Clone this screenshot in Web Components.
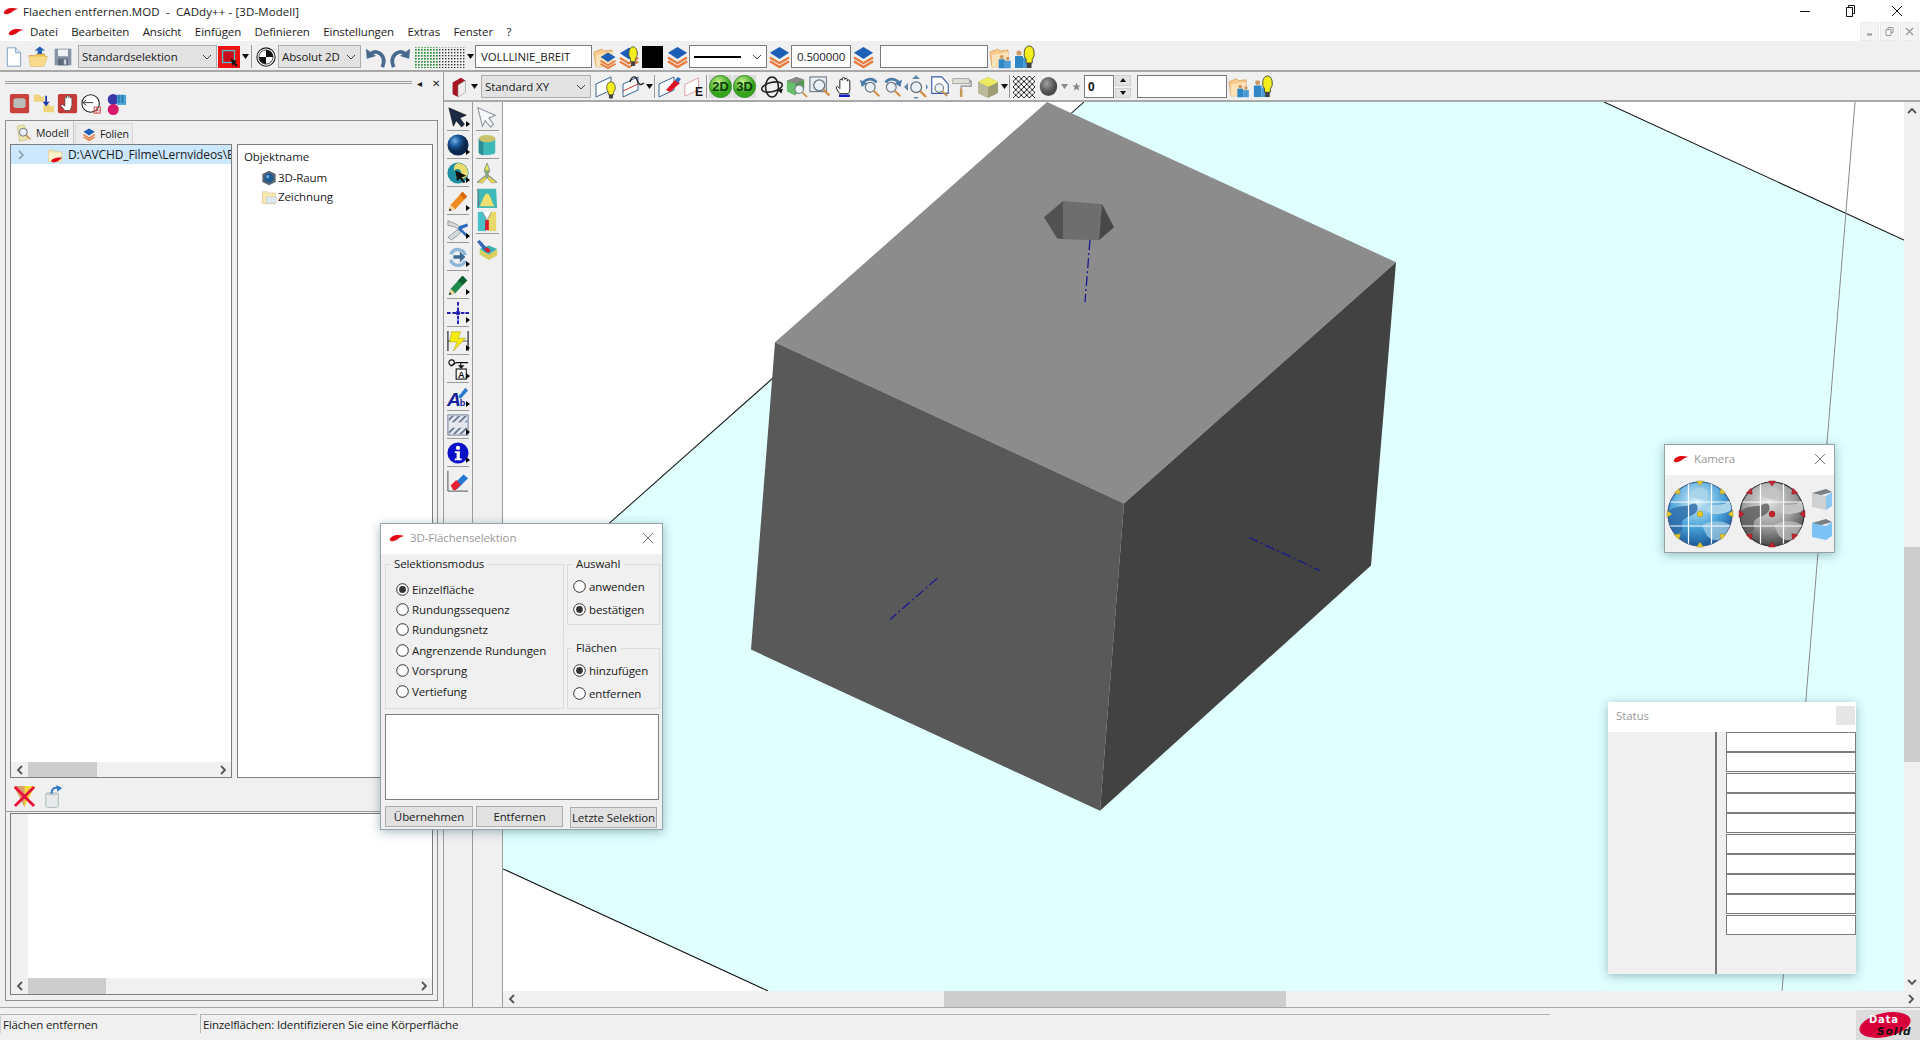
<!DOCTYPE html>
<html lang="de">
<head>
<meta charset="utf-8">
<title>CADdy++</title>
<style>
  html, body { margin: 0; height: 100%; overflow: hidden; }
  body { background: #f0f0f0; color: #1a1a1a; font: 11.5px "Open Sans", "Noto Sans", sans-serif; letter-spacing: -.1px; position: relative; }
</style>
</head>
<body>
<cad-titlebar title-text="Flaechen entfernen.MOD  -  CADdy++ - [3D-Modell]"></cad-titlebar>
<cad-menubar></cad-menubar>
<cad-toolbar class="top" pad="5">
  <cad-icon name="new" w="20" style="margin-left:4px"></cad-icon>
  <cad-icon name="open" w="21" style="margin-left:4px"></cad-icon>
  <cad-icon name="save" w="20" style="margin-left:4px"></cad-icon>
  <cad-combo w="139" style="margin-left:5px">Standardselektion</cad-combo>
  <cad-icon name="redbtn" w="22" style="margin-left:1px"></cad-icon>
  <cad-arrow style="margin-left:2px"></cad-arrow>
  <cad-sep style="margin-left:2px"></cad-sep>
  <cad-icon name="target" w="20" style="margin-left:4px"></cad-icon>
  <cad-combo w="83" style="margin-left:2px">Absolut 2D</cad-combo>
  <cad-icon name="undo" w="22" style="margin-left:4px"></cad-icon>
  <cad-icon name="redo" w="22" style="margin-left:2px"></cad-icon>
  <cad-icon name="grid" w="50" style="margin-left:4px"></cad-icon>
  <cad-arrow style="margin-left:2px"></cad-arrow>
  <cad-input w="117" style="margin-left:1px">VOLLLINIE_BREIT</cad-input>
  <cad-icon name="folderlayers" w="24" style="margin-left:1px"></cad-icon>
  <cad-icon name="layerbulb" w="22" style="margin-left:1px"></cad-icon>
  <cad-swatch style="margin-left:2px"></cad-swatch>
  <cad-icon name="layers" w="23" style="margin-left:3px"></cad-icon>
  <cad-linecombo></cad-linecombo>
  <cad-icon name="layers" w="23" style="margin-left:1px"></cad-icon>
  <cad-input w="60">0.500000</cad-input>
  <cad-icon name="layers" w="23" style="margin-left:1px"></cad-icon>
  <cad-input w="108" style="margin-left:5px"></cad-input>
  <cad-icon name="folderpeople" w="24" style="margin-left:1px"></cad-icon>
  <cad-icon name="peoplebulb" w="24"></cad-icon>
</cad-toolbar>

<cad-workspace>
  <model-panel slot="left"></model-panel>
  <cad-toolbar slot="toolbar" pad="3">
    <cad-icon name="redcube" w="22" style="margin-left:4px"></cad-icon>
    <cad-arrow style="margin-left:1px"></cad-arrow>
    <cad-combo w="110" style="margin-left:3px">Standard XY</cad-combo>
    <cad-icon name="planebulb" w="24" style="margin-left:3px"></cad-icon>
    <cad-icon name="planecurve" w="24" style="margin-left:3px"></cad-icon>
    <cad-arrow style="margin-left:1px"></cad-arrow>
    <cad-sep style="margin-left:1px"></cad-sep>
    <cad-icon name="planepen" w="24" style="margin-left:2px"></cad-icon>
    <cad-icon name="planee" w="22" style="margin-left:2px"></cad-icon>
    <cad-sep style="margin-left:1px"></cad-sep>
    <cad-icon name="btn2d" w="23" style="margin-left:2px"></cad-icon>
    <cad-icon name="btn3d" w="23" style="margin-left:1px"></cad-icon>
    <cad-icon name="orbit" w="22" style="margin-left:5px"></cad-icon>
    <cad-icon name="zoomcube" w="23" style="margin-left:2px"></cad-icon>
    <cad-icon name="zoombox" w="22" style="margin-left:1px"></cad-icon>
    <cad-icon name="hand" w="20" style="margin-left:3px"></cad-icon>
    <cad-icon name="rotzooml" w="22" style="margin-left:5px"></cad-icon>
    <cad-icon name="rotzoomr" w="22" style="margin-left:0"></cad-icon>
    <cad-icon name="zoomarrows" w="24" style="margin-left:1px"></cad-icon>
    <cad-icon name="zoomdoc" w="22" style="margin-left:1px"></cad-icon>
    <cad-icon name="roller" w="20" style="margin-left:1px"></cad-icon>
    <cad-icon name="goldcube" w="24" style="margin-left:4px"></cad-icon>
    <cad-arrow style="margin-left:1px"></cad-arrow>
    <cad-sep style="margin-left:1px"></cad-sep>
    <cad-icon name="checker" w="22" style="margin-left:3px"></cad-icon>
    <cad-icon name="sphere" w="19" style="margin-left:4px"></cad-icon>
    <cad-arrow gray style="margin-left:3px"></cad-arrow>
    <cad-icon name="star" w="9" style="margin-left:4px"></cad-icon>
    <cad-spin style="margin-left:3px">0</cad-spin>
    <cad-input w="90" style="margin-left:6px"></cad-input>
    <cad-icon name="folderpeople" w="23" style="margin-left:1px"></cad-icon>
    <cad-icon name="peoplebulb" w="23" style="margin-left:1px"></cad-icon>
  </cad-toolbar>
  <tool-strip slot="tools"></tool-strip>
  <model-canvas slot="canvas"></model-canvas>
</cad-workspace>
<cad-statusbar></cad-statusbar>

<float-window title-text="3D-Flächenselektion" logo style="left:380px;top:523px;width:283px;height:307px">
  <selection-form></selection-form>
</float-window>
<float-window title-text="Kamera" logo style="left:1664px;top:444px;width:171px;height:109px">
  <camera-controls></camera-controls>
</float-window>
<float-window title-text="Status" grey-close style="left:1608px;top:702px;width:248px;height:272px">
  <status-fields></status-fields>
</float-window>

<script>
const SWOOSH = '<path d="M1 15C3 8 12 6 23 9c-5 1-7 2-10 5-4 3-10 4-12 1z" fill="#e30613"/>';
const LAYERS = '<path d="M2 13l10 6 10-6" fill="none" stroke="#e87a3c" stroke-width="2.4"/><path d="M2 17l10 6 10-6" fill="none" stroke="#e87a3c" stroke-width="2.4"/><path d="M12 2l10 6-10 6.500-10-6.500z" fill="#1c5fb4"/>';
const BULB = '<path d="M12 1a7.500 7.500 0 0 0-4.500 13.500V18h9v-3.500A7.500 7.500 0 0 0 12 1z" fill="#f4ee1e" stroke="#333"/><rect x="8.500" y="18" width="7" height="5" fill="#444"/>';
const FOLDER = '<path d="M1 7l8-3 2 2 8-1v16L3 22z" fill="#f7c98a" stroke="#d9a25e" stroke-width=".8"/><path d="M3 10l16-3v14L3 22z" fill="#fbe2b8"/>';
const PEOPLE = '<g fill="#2f86c5"><circle cx="9" cy="8" r="2.600" fill="#c96"/><path d="M5 11h8v12H5z"/><circle cx="17" cy="10" r="2.400" fill="#c96"/><path d="M13 13h8v10h-8z" fill="#4a9bd6"/></g>';
const PLANE = (c) => `<path d="M2 9L17 2v13L2 22z" fill="#fff" stroke="${c}"/>`;
const MAG = '<circle cx="10" cy="10" r="6.500" fill="#eaf2f8" stroke="#6b7480" stroke-width="1.600"/><path d="M15 15l7 7" stroke="#d28a3c" stroke-width="2.600"/>';
const GREENBTN = (id, t) => `<defs><radialGradient id="${id}" cx=".4" cy=".3"><stop offset="0" stop-color="#c6f58c"/><stop offset="1" stop-color="#36a51e"/></radialGradient></defs><rect width="24" height="24" fill="#dcdcdc"/><circle cx="12" cy="12" r="11.500" fill="url(#${id})" stroke="#3a8d2a"/><text x="12" y="17" text-anchor="middle" font-family="Liberation Sans" font-weight="700" font-size="13.500" letter-spacing="0" fill="#0c3c0c">${t}</text>`;

const ICONS = {
  swoosh: SWOOSH,
  new: '<path d="M4 1h10l6 6v16H4z" fill="#fff" stroke="#6b93bd"/><path d="M14 1v6h6" fill="#dfe8f2" stroke="#6b93bd"/>',
  open: '<path d="M1 11h7l2-2h9v3h3l-4 11H3z" fill="#f3c050" stroke="#c2913a" stroke-width=".8"/><path d="M1 12l2 11 15 0 4-11z" fill="#f9d98a"/><path d="M11 9V5H7.500l6-4.500 6 4.500H16v4z" fill="#2560b8"/>',
  save: '<rect x="2" y="2" width="20" height="20" fill="#8794a5"/><rect x="6" y="3" width="12" height="8" fill="#f0f3f6"/><rect x="6" y="14" width="12" height="8" fill="#5d6a7b"/><rect x="13" y="15" width="3" height="6" fill="#d0d6de"/>',
  redbtn: '<rect width="24" height="24" fill="#ee1111"/><rect x="5" y="5" width="13" height="13" fill="#c80d1a" stroke="#56b9c8" stroke-width="1.500"/><path d="M14 14l7 3-2.500 1 3 3-1.500 1.500-3-3-1 2.500z" fill="#111"/>',
  target: '<circle cx="12" cy="12" r="11" fill="#fff" stroke="#222" stroke-width="1.300"/><circle cx="12" cy="12" r="8.500" fill="#fff" stroke="#222"/><path d="M12 12V3.500A8.500 8.500 0 0 1 20.500 12zM12 12v8.500A8.500 8.500 0 0 1 3.500 12z" fill="#111"/>',
  undo: '<path d="M19 23C24 11 14 3 7 8" fill="none" stroke="#47698c" stroke-width="4"/><path d="M1 3l1 11 10-3z" fill="#47698c"/>',
  redo: '<path d="M5 23C0 11 10 3 17 8" fill="none" stroke="#47698c" stroke-width="4"/><path d="M23 3l-1 11-10-3z" fill="#47698c"/>',
  grid: '<defs><pattern id="gd" width="3" height="3" patternUnits="userSpaceOnUse"><rect width="1.700" height="1.700" fill="#2f8f3a"/></pattern><pattern id="kd" width="3" height="3" patternUnits="userSpaceOnUse"><rect width="1.400" height="1.400" fill="#333"/></pattern></defs><rect y="1" width="24" height="21" fill="url(#gd)"/><rect x="24" y="1" width="26" height="21" fill="url(#kd)"/>',
  layers: LAYERS,
  folderlayers: FOLDER + '<g transform="translate(6 6) scale(.75)">' + LAYERS + '</g>',
  layerbulb: LAYERS + '<g transform="translate(9 0) scale(.62 .95)">' + BULB + '</g>',
  folderpeople: FOLDER + '<g transform="translate(6 6) scale(.75)">' + PEOPLE + '</g>',
  peoplebulb: '<g transform="translate(-3 0)">' + PEOPLE + '</g><g transform="translate(8 0) scale(.68 1)">' + BULB + '</g>',
  redcube: '<path d="M5 7l9-5 5 3-8 5v13l-6-3z" fill="#a31622"/><path d="M11 10l8-5v13l-8 5z" fill="#eee" stroke="#999" stroke-width=".7"/>',
  planebulb: PLANE('#39648f') + '<g transform="translate(10 6) scale(.58 .76)">' + BULB + '</g>',
  planecurve: PLANE('#39648f') + '<path d="M2 16L17 9" stroke="#c33"/><path d="M9 7c2-7 6-6 7-2s3 6 7 3" fill="none" stroke="#222" stroke-width="1.400"/>',
  planepen: PLANE('#39648f') + '<path d="M9 15l9-10 5 3-10 9z" fill="#e01020"/><path d="M18 5l3-3 3 2-3 4z" fill="#2a6fc0"/>',
  planee: PLANE('#d89a9a') + '<text x="13" y="22" font-family="Liberation Sans" font-weight="700" font-size="13" fill="#111">E</text>',
  btn2d: GREENBTN('g2', '2D'),
  btn3d: GREENBTN('g3', '3D'),
  orbit: '<g fill="none" stroke="#222" stroke-width="1.700"><ellipse cx="12" cy="12" rx="7" ry="11"/><ellipse cx="12" cy="12" rx="11.500" ry="5" transform="rotate(-14 12 12)"/></g><path d="M18 15l6-1-2 5z" fill="#111"/>',
  zoomcube: '<path d="M2 6l10-4 8 3v9l-10 7-8-4z" fill="#4f9a50"/><path d="M2 6l10-4 8 3-9 4z" fill="#888"/><path d="M2 6l9 3v12l-9-4z" fill="#69c06c"/><g transform="translate(8 8) scale(.68)">' + MAG + '</g>',
  zoombox: '<rect x="1" y="1" width="18" height="16" fill="#e8eef2" stroke="#788290" stroke-width="1.300"/><g transform="translate(2 1) scale(.92)">' + MAG + '</g>',
  hand: '<path d="M7 20c-2-3-5-6-4-8s3 1 4 2V4c0-2 3-2 3 0V2c0-2 3-2 3 0v1c0-2 3-2 3 0v2c0-2 3-2 3 0v10c0 2-1 4-2 5z" fill="#fff" stroke="#111" stroke-width="1.100"/><rect x="6" y="21" width="13" height="3" fill="#1020c0"/>',
  rotzooml: '<path d="M4 10C5 3 15 1 19 7" fill="none" stroke="#4c7da8" stroke-width="3"/><path d="M1 4l2 8 6-4z" fill="#4c7da8"/><g transform="translate(4 4) scale(.82)">' + MAG + '</g>',
  rotzoomr: '<path d="M20 10C19 3 9 1 5 7" fill="none" stroke="#4c7da8" stroke-width="3"/><path d="M23 4l-2 8-6-4z" fill="#4c7da8"/><g transform="translate(3 4) scale(.82)">' + MAG + '</g>',
  zoomarrows: '<g fill="#5f89ad"><path d="M12 0l4 4H8zM0 12l4-4v8zM22 9l2 3-2 3zM9 22h6l-3 2z"/></g><g transform="translate(4 4) scale(.82)">' + MAG + '</g>',
  zoomdoc: '<path d="M3 1h11l7 8v10l-18 0z" fill="#fff" stroke="#3a58a5" stroke-width="1.200"/><g transform="translate(4 6) scale(.72)">' + MAG + '</g>',
  roller: '<rect x="1" y="2" width="20" height="6" fill="#dcdfd8" stroke="#98a09a"/><path d="M21 5h2v6H11v4" fill="none" stroke="#888" stroke-width="1.400"/><rect x="9.500" y="14" width="3" height="10" fill="#c79a5a"/>',
  goldcube: '<path d="M2 7l10-5 10 5v11l-10 5-10-5z" fill="#9d9c74"/><path d="M2 7l10-5 10 5-10 5z" fill="#ecec60"/><path d="M2 7l10 5v11l-10-5z" fill="#b9b89a"/>',
  checker: '<defs><pattern id="ch" width="6" height="6" patternUnits="userSpaceOnUse"><path d="M0 0l6 6M6 0L0 6" stroke="#111" stroke-width="1"/></pattern></defs><rect width="24" height="24" fill="#fff"/><rect width="24" height="24" fill="url(#ch)"/>',
  sphere: '<defs><radialGradient id="sp" cx=".4" cy=".35"><stop offset="0" stop-color="#a0a0a0"/><stop offset="1" stop-color="#4c4c4c"/></radialGradient></defs><ellipse cx="12" cy="12" rx="11" ry="12" fill="url(#sp)"/>',
  star: '<path d="M12 1l3 8h8l-6 5 2 9-7-5-7 5 2-9-6-5h8z" fill="#888"/>',
  /* left column tools */
  arrowdark: '<path d="M2 2l19 8-7 3 5 7-3 3-6-7-3 6z" fill="#1d2a44" stroke="#000" stroke-width=".6"/>',
  arrowlight: '<path d="M2 2l19 8-7 3 5 7-3 3-6-7-3 6z" fill="#f6f8fa" stroke="#8d97a0" stroke-width="1.200"/>',
  ball: '<defs><radialGradient id="bl" cx=".35" cy=".3"><stop offset="0" stop-color="#7cb4e8"/><stop offset=".5" stop-color="#1c5a9c"/><stop offset="1" stop-color="#0a2850"/></radialGradient></defs><circle cx="12" cy="12" r="11.500" fill="url(#bl)"/>',
  globecursor: '<circle cx="12" cy="12" r="11.500" fill="#1d8fa0"/><path d="M12 1a11 11 0 0 1 11 11c0 5-8 9-14 4 4-1 8-2 6-6-1-3-6-3-7 0-1-4 0-8 4-9z" fill="#e9dd6e"/><path d="M9 9l12 6-5 2 4 5-2 1-4-5-3 3z" fill="#111"/>',
  pencil: '<path d="M2 23l2-7L17 2l5 5L9 21z" fill="#ee8a1e"/><path d="M17 2l5 5-3 3-5-5z" fill="#d56a10"/><path d="M2 23l2-7 5 5z" fill="#f2d6a4"/><path d="M2 23l1-3 2 2z" fill="#222"/>',
  tools: '<path d="M1 3l10 4 4 4-2 2-4-3-8-2zM1 21l9-7 3-1 2 2-2 3-8 6z" fill="#d4d9de" stroke="#777" stroke-width=".7"/><path d="M13 9l9-3 1 3-7 3 6 6-2 2-8-8z" fill="#2c6bc0"/>',
  rotate: '<path d="M20 10C18 3 8 1 4 9" fill="none" stroke="#8fb6d6" stroke-width="3.600"/><path d="M4 15c2 7 12 9 16 1" fill="none" stroke="#8fb6d6" stroke-width="3.600"/><path d="M7 10h7V6l6 6-6 6v-4H7z" fill="#3d6b94"/>',
  greenpen: '<path d="M2 23l2-7L17 2l5 5L9 21z" fill="#1f8a4a"/><path d="M17 2l5 5-5 5-5-5z" fill="#0e5f30"/><path d="M2 23l2-7 5 5z" fill="#f2d6a4"/><path d="M2 23l1-3 2 2z" fill="#222"/>',
  cross: '<g fill="#1212b0"><rect x="11" y="0" width="2" height="4"/><rect x="11" y="6" width="2" height="4"/><rect x="11" y="15" width="2" height="4"/><rect x="11" y="20" width="2" height="4"/><rect x="0" y="11" width="4" height="2"/><rect x="6" y="11" width="4" height="2"/><rect x="15" y="11" width="4" height="2"/><rect x="20" y="11" width="4" height="2"/><rect x="10" y="10" width="4" height="4"/></g>',
  bolt: '<path d="M1 1v22M23 1v22" stroke="#333" stroke-width="1.400"/><path d="M1 12h22" stroke="#333" stroke-width=".8"/><path d="M5 2h10l-3 7h8L7 23l4-10H3z" fill="#f4ec10" stroke="#a99d10" stroke-width=".6"/>',
  weld: '<circle cx="5" cy="5" r="3" fill="none" stroke="#111" stroke-width="1.200"/><path d="M4 9l6-4h13M15 5v6" stroke="#111" stroke-width="1.200" fill="none"/><path d="M12 8h7l-3.500 4z" fill="#111"/><rect x="10" y="12" width="11" height="11" fill="#fff" stroke="#111" stroke-width="1.200"/><text x="15.500" y="21.500" text-anchor="middle" font-family="Liberation Sans" font-weight="700" font-size="10" fill="#111">A</text>',
  textpen: '<text x="0" y="22" font-family="Liberation Sans" font-weight="700" font-style="italic" font-size="21" fill="#14209c">A</text><text x="14" y="22" font-family="Liberation Sans" font-weight="700" font-size="10" fill="#14209c">b</text><path d="M12 12l8-10 3 3-8 9z" fill="#2f7bd0"/>',
  hatch: '<defs><pattern id="hc" width="5" height="5" patternUnits="userSpaceOnUse" patternTransform="rotate(-45)"><rect width="5" height="1.800" fill="#5c6d8c"/></pattern></defs><rect x="1" y="1" width="22" height="22" fill="#e4e8ee" stroke="#6a7a94"/><rect x="2" y="2" width="20" height="7" fill="url(#hc)"/><rect x="2" y="15" width="20" height="7" fill="url(#hc)"/>',
  info: '<circle cx="12" cy="12" r="11.500" fill="#0a10c8"/><circle cx="12" cy="6.500" r="2.300" fill="#fff"/><path d="M8.500 10h5.500v8h2v2H8.500v-2h2v-6h-2z" fill="#fff"/>',
  eraser: '<path d="M1 1v22h22" fill="none" stroke="#444"/><path d="M6 17L18 5l5 4-12 12H8z" fill="#2478d0"/><path d="M4 17l6-6 5 5-6 6H7z" fill="#e8222e"/>',
  cylinder: '<path d="M3 5v15c0 4 18 4 18 0V5z" fill="#3fb8b8"/><path d="M3 5v15c0 2 3 3 5 3.500V5z" fill="#2a8d96"/><ellipse cx="12" cy="5" rx="9" ry="4" fill="#c9c46c"/>',
  triple: '<path d="M12 1l3 8-2 5 10 8-6 1-5-6-5 6-6-1 10-8-2-5z" fill="#8ea97b" stroke="#556" stroke-width=".5"/><path d="M12 2l2 7h-4z" fill="#ecec50"/><path d="M2 22l8-6 1 2-4 5zM22 22l-8-6-1 2 4 5z" fill="#e8d050"/>',
  arch: '<path d="M2 2h20l1 21H1z" fill="#3fb8b8"/><path d="M3 21C6 21 8 7 12 7s6 14 9 14z" fill="#f0e070"/><path d="M2 2l1 19" stroke="#666"/>',
  zipper: '<path d="M2 2h9v21H2z" fill="#47c2c8"/><path d="M13 2h9v21h-9z" fill="#e8d86a"/><path d="M7 2l5 9 5-9" fill="#fff" stroke="#777" stroke-width=".7"/><rect x="10" y="11" width="4" height="11" fill="#d81a2a"/>',
  chisel: '<path d="M4 11l10 6 9-6v7l-9 5-10-6z" fill="#d9cf60"/><path d="M4 11l10-4 9 4-9 6z" fill="#38b0b0"/><path d="M1 3l3-2 11 12-4 2z" fill="#3768b0"/><path d="M9 11l4-2 3 4-3 2z" fill="#e01a2a"/>',
  /* tree icons */
  modelicon: '<path d="M3 3l8-2 5 7v13l-10 2z" fill="#eee6b0" stroke="#b5a860" stroke-width=".7"/><g transform="translate(3 3) scale(.8)">' + MAG + '</g>',
  folienicon: '<g transform="translate(2 2) scale(.85)">' + LAYERS + '</g>',
  foldermodel: '<path d="M2 5h8l2 2h10v15H2z" fill="#f8e7a6" stroke="#d8c080" stroke-width=".8"/><path d="M3 9h18v12H3z" fill="#fff4cb"/><path d="M6 21c2-4 9-6 17-5-4 2-5 6-12 7-3 0-4-1-5-2z" fill="#e30613"/>',
  raum: '<path d="M12 1l10 5v12l-10 5-10-5V6z" fill="#5d6670"/><circle cx="12" cy="12" r="7" fill="#1f5c96"/><circle cx="10" cy="10" r="2.500" fill="#6aa6d8"/>',
  zeichnung: '<path d="M2 4h8l2 2h10v16H2z" fill="#f6e8ae" stroke="#cbb87a" stroke-width=".7"/><path d="M8 12h15v9H8z" fill="#dfe9f2" stroke="#b6c2cf" stroke-width=".7"/>',
  /* panel toolbar icons */
  panelred: '<rect x="1" y="1" width="22" height="22" rx="2" fill="#c9413c"/><rect x="5" y="6" width="14" height="11" rx="3" fill="#b9bcb8"/>',
  panelfolders: '<path d="M1 2h7l1 2h4v6H1z" fill="#efd27e"/><path d="M12 13h7l1 2h4v7H12z" fill="#efd27e"/><path d="M14 3v7h-3l4 5 4-5h-3V3z" fill="#1c3aa8"/>',
  panelhand: '<rect x="1" y="1" width="22" height="22" rx="2" fill="#c63a38"/><path d="M9 20l-5-6 2-1 3 2V6c0-2 2-2 2 0V4c0-2 2-2 2 0v1c0-2 2-2 2 0v1c0-1 2-1 2 0v8l-2 6z" fill="#fff" stroke="#333" stroke-width=".7"/>',
  panelcircle: '<circle cx="11" cy="12" r="10" fill="#fff" stroke="#222" stroke-width="1.200"/><path d="M3 11h11M6 8L2 11l4 3" fill="none" stroke="#222"/><rect x="15" y="16" width="7" height="7" fill="none" stroke="#c33"/><path d="M15 20h7M18 16v7" stroke="#c33" stroke-width=".7"/>',
  panelballs: '<circle cx="9" cy="7" r="6" fill="#3a38a8"/><circle cx="9" cy="18" r="6" fill="#d8186a"/><path d="M13 2h10v11H13z" fill="#4aa6d6"/><path d="M14 2h2v9h-2zM18 2h2v9h-2z" fill="#2a7ab0"/>',
  delcone: '<path d="M1 1h22L12 23z" fill="#f5d93a"/><path d="M1 1h11v22z" fill="#d8a070"/><path d="M2 2l20 20M22 2L2 22" stroke="#e6103c" stroke-width="3"/>',
  bucket: '<path d="M5 9h13v13c0 2-13 2-13 0z" fill="#e8eaec" stroke="#9aa" stroke-width=".8"/><ellipse cx="11.500" cy="9" rx="6.500" ry="2" fill="#c8ccd0"/><path d="M11 9c0-5 3-7 7-6" fill="none" stroke="#2d78c4" stroke-width="2"/><path d="M16 0l6 3-5 4z" fill="#2d78c4"/>'
};
const VIEWS = { grid: '0 0 50 22' };

class CadIcon extends HTMLElement {
  connectedCallback() {
    const w = this.getAttribute('w') || 24;
    const name = this.getAttribute('name');
    const h = name === 'grid' ? 22 : (this.getAttribute('h') || w);
    this.attachShadow({ mode: 'open' });
    this.shadowRoot.innerHTML = `
      <style>
        :host { display: inline-flex; flex: none; align-items: center; }
        svg { display: block; overflow: visible; }
      </style>
      <svg width="${w}" height="${h}" viewBox="${VIEWS[name] || '0 0 24 24'}">${ICONS[name] || ''}</svg>`;
  }
}
customElements.define('cad-icon', CadIcon);

class CadTitlebar extends HTMLElement {
  connectedCallback() {
    this.attachShadow({ mode: 'open' });
    this.shadowRoot.innerHTML = `
      <style>
        :host { display: flex; align-items: center; height: 22px; background: #fff; padding-left: 3px; }
        .t { margin-left: 4px; white-space: pre; letter-spacing: .1px; }
        .btns { margin-left: auto; display: flex; }
        .btns span { width: 46px; height: 22px; display: flex; align-items: center; justify-content: center; }
      </style>
      <cad-icon name="swoosh" w="16"></cad-icon>
      <span class="t">${this.getAttribute('title-text')}</span>
      <div class="btns">
        <span><svg width="10" height="10"><path d="M0 5.500h10" stroke="#111"/></svg></span>
        <span><svg width="12" height="12" fill="none" stroke="#111"><path d="M3.500 2.500v-2h6v8h-2"/><path d="M1.500 2.500h6v9h-6z"/></svg></span>
        <span><svg width="12" height="12" stroke="#111"><path d="M1 1l10 10M11 1L1 11"/></svg></span>
      </div>`;
  }
}
customElements.define('cad-titlebar', CadTitlebar);

class CadMenubar extends HTMLElement {
  connectedCallback() {
    const items = ['Datei', 'Bearbeiten', 'Ansicht', 'Einfügen', 'Definieren', 'Einstellungen', 'Extras', 'Fenster', '?'];
    this.attachShadow({ mode: 'open' });
    this.shadowRoot.innerHTML = `
      <style>
        :host { display: flex; align-items: center; height: 19px; background: #fff; padding-left: 8px; }
        nav { display: flex; gap: 13.5px; margin-left: 6px; }
        .mdi { margin-left: auto; display: flex; gap: 1px; margin-right: 1px; align-self: flex-end; }
        .mdi span { width: 19px; height: 19px; background: #f4f4f4; border: 1px solid #eaeaea; box-sizing: border-box; display: flex; align-items: center; justify-content: center; }
      </style>
      <cad-icon name="swoosh" w="16"></cad-icon>
      <nav>${items.map(i => `<span>${i}</span>`).join('')}</nav>
      <div class="mdi">
        <span><svg width="8" height="8"><path d="M1 6.500h5" stroke="#999" stroke-width="2"/></svg></span>
        <span><svg width="9" height="10" fill="none" stroke="#999"><path d="M3 2.500V.5h5v5H6M1 2.500h5v6H1z"/></svg></span>
        <span><svg width="9" height="9" stroke="#999" stroke-width="1.400"><path d="M1 1l7 7M8 1L1 8"/></svg></span>
      </div>`;
  }
}
customElements.define('cad-menubar', CadMenubar);

class CadToolbar extends HTMLElement {
  connectedCallback() {
    const top = this.classList.contains('top');
    this.attachShadow({ mode: 'open' });
    this.shadowRoot.innerHTML = `
      <style>
        :host { display: flex; align-items: center; box-sizing: border-box; height: ${top ? 31 : 30}px; padding-top: ${top ? 2 : 1}px; border-bottom: 2px solid #a8a8a8; background: #f0f0f0; }
      </style>
      <slot></slot>`;
  }
}
customElements.define('cad-toolbar', CadToolbar);

class CadCombo extends HTMLElement {
  connectedCallback() {
    this.attachShadow({ mode: 'open' });
    this.shadowRoot.innerHTML = `
      <style>
        :host { display: flex; flex: none; align-items: center; box-sizing: border-box; width: ${this.getAttribute('w')}px; height: 23px; background: #e3e3e3; border: 1px solid #adadad; padding-left: 3px; white-space: nowrap; }
        svg { margin-left: auto; margin-right: 4px; }
      </style>
      <slot></slot>
      <svg width="10" height="6" fill="none" stroke="#444"><path d="M1 1l4 4 4-4"/></svg>`;
  }
}
customElements.define('cad-combo', CadCombo);

class CadInput extends HTMLElement {
  connectedCallback() {
    this.attachShadow({ mode: 'open' });
    this.shadowRoot.innerHTML = `
      <style>
        :host { display: flex; flex: none; align-items: center; box-sizing: border-box; width: ${this.getAttribute('w')}px; height: 23px; background: #fff; border: 1px solid #7a7a7a; padding-left: 5px; white-space: nowrap; }
      </style>
      <slot></slot>`;
  }
}
customElements.define('cad-input', CadInput);

class CadArrow extends HTMLElement {
  connectedCallback() {
    const c = this.hasAttribute('gray') ? '#888' : '#111';
    this.attachShadow({ mode: 'open' });
    this.shadowRoot.innerHTML = `
      <style>:host { display: inline-flex; flex: none; width: 7px; justify-content: center; }</style>
      <svg width="7" height="5"><path d="M0 0h7L3.500 5z" fill="${c}"/></svg>`;
  }
}
customElements.define('cad-arrow', CadArrow);

class CadSep extends HTMLElement {
  connectedCallback() {
    this.attachShadow({ mode: 'open' });
    this.shadowRoot.innerHTML = `<style>:host { display: block; flex: none; width: 1px; height: 23px; background: #9a9a9a; }</style>`;
  }
}
customElements.define('cad-sep', CadSep);

class CadSwatch extends HTMLElement {
  connectedCallback() {
    this.attachShadow({ mode: 'open' });
    this.shadowRoot.innerHTML = `<style>:host { display: block; flex: none; width: 21px; height: 22px; background: #000; }</style>`;
  }
}
customElements.define('cad-swatch', CadSwatch);

class CadLinecombo extends HTMLElement {
  connectedCallback() {
    this.attachShadow({ mode: 'open' });
    this.shadowRoot.innerHTML = `
      <style>
        :host { display: flex; flex: none; align-items: center; box-sizing: border-box; width: 78px; height: 23px; background: #fff; border: 1px solid #7a7a7a; padding: 0 4px; }
        i { display: block; width: 47px; height: 2px; background: #000; margin-right: auto; }
      </style>
      <i></i><svg width="10" height="6" fill="none" stroke="#444"><path d="M1 1l4 4 4-4"/></svg>`;
  }
}
customElements.define('cad-linecombo', CadLinecombo);

class CadSpin extends HTMLElement {
  connectedCallback() {
    this.attachShadow({ mode: 'open' });
    this.shadowRoot.innerHTML = `
      <style>
        :host { display: flex; flex: none; height: 23px; }
        .v { width: 30px; box-sizing: border-box; background: #fff; border: 1px solid #7a7a7a; font-weight: 700; display: flex; align-items: center; padding-left: 3px; }
        .b { width: 16px; margin-left: 1px; display: flex; flex-direction: column; gap: 2px; }
        .b span { flex: 1; background: #e3e3e3; border: 1px solid #cfcfcf; display: flex; align-items: center; justify-content: center; }
      </style>
      <div class="v"><slot></slot></div>
      <div class="b">
        <span><svg width="6" height="4"><path d="M0 4h6L3 0z" fill="#111"/></svg></span>
        <span><svg width="6" height="4"><path d="M0 0h6L3 4z" fill="#111"/></svg></span>
      </div>`;
  }
}
customElements.define('cad-spin', CadSpin);

class CadWorkspace extends HTMLElement {
  connectedCallback() {
    this.attachShadow({ mode: 'open' });
    this.shadowRoot.innerHTML = `
      <style>
        :host { display: flex; height: 936px; border-bottom: 1px solid #a8a8a8; box-sizing: border-box; }
        .left { width: 443px; flex: none; border-right: 1px solid #9c9c9c; }
        .right { flex: 1; min-width: 0; display: flex; flex-direction: column; }
        .body { flex: 1; min-height: 0; display: flex; }
      </style>
      <div class="left"><slot name="left"></slot></div>
      <div class="right">
        <slot name="toolbar"></slot>
        <div class="body">
          <slot name="tools"></slot>
          <slot name="canvas"></slot>
        </div>
      </div>`;
  }
}
customElements.define('cad-workspace', CadWorkspace);

class CadScrollbar extends HTMLElement {
  connectedCallback() {
    const v = this.hasAttribute('vertical');
    const start = this.getAttribute('start');
    const size = this.getAttribute('size');
    const arrow = this.getAttribute('arrow') || 18;
    const thick = this.getAttribute('thick') || 16;
    const a = v ? 'M1 6l4-4 4 4' : 'M6 1L2 5l4 4';
    const b = v ? 'M1 2l4 4 4-4' : 'M2 1l4 4-4 4';
    const box = v ? 'width="10" height="8"' : 'width="8" height="10"';
    this.attachShadow({ mode: 'open' });
    this.shadowRoot.innerHTML = `
      <style>
        :host { display: flex; flex: none; flex-direction: ${v ? 'column' : 'row'}; ${v ? 'width' : 'height'}: ${thick}px; background: #f0f0f0; }
        .a { flex: none; ${v ? 'height' : 'width'}: ${arrow}px; display: flex; align-items: center; justify-content: center; }
        .s { flex: none; ${v ? 'height' : 'width'}: ${start}px; }
        .t { flex: none; ${v ? 'height' : 'width'}: ${size}px; background: #cdcdcd; }
        .r { flex: 1; }
      </style>
      <div class="a"><svg ${box} fill="none" stroke="#555" stroke-width="1.800"><path d="${a}"/></svg></div>
      <div class="s"></div><div class="t"></div><div class="r"></div>
      <div class="a"><svg ${box} fill="none" stroke="#555" stroke-width="1.800"><path d="${b}"/></svg></div>`;
  }
}
customElements.define('cad-scrollbar', CadScrollbar);

class ModelPanel extends HTMLElement {
  connectedCallback() {
    this.attachShadow({ mode: 'open' });
    this.shadowRoot.innerHTML = `
      <style>
        :host { display: flex; flex-direction: column; height: 935px; }
        .grip { display: flex; align-items: center; height: 21px; padding: 0 0 0 5px; }
        .grip i { display: block; width: 407px; height: 1px; border-top: 1px solid #a0a0a0; border-bottom: 1px solid #a0a0a0; }
        .grip b { font-weight: 400; font-size: 10px; margin-left: 5px; width: 10px; }
        .icons { display: flex; gap: 3px; height: 27px; padding-left: 9px; align-items: flex-start; }
        .frame { margin: 0 5px; height: 881px; box-sizing: border-box; border: 1px solid #8e8e8e; padding: 0 4px; display: flex; flex-direction: column; }
        .tabs { display: flex; height: 23px; align-items: flex-end; font-size: 10.5px; }
        .tab { display: flex; align-items: center; gap: 3px; box-sizing: border-box; }
        .tab.on { height: 23px; width: 64px; padding-left: 5px; border-right: 1px solid #c6c6c6; }
        .tab.off { height: 21px; width: 58px; padding-left: 5px; border: 1px solid #d8d8d8; border-bottom: 0; background: #ececec; margin-left: 1px; }
        .lists { display: flex; gap: 5px; height: 634px; }
        .list { box-sizing: border-box; border: 1px solid #7d7d7d; background: #fff; }
        .tree { width: 222px; display: flex; flex-direction: column; }
        .sel { display: flex; align-items: center; height: 19px; background: #cce8ff; overflow: hidden; white-space: nowrap; }
        .sel svg { margin-left: 6px; flex: none; }
        .sel cad-icon { margin-left: 22px; }
        .sel span { margin-left: 5px; font-size: 12px; }
        .grow { flex: 1; }
        .objs { flex: 1; padding: 0 0 0 6px; }
        .objs div { height: 19px; display: flex; align-items: center; }
        .objs .r { padding-left: 17px; gap: 1px; }
        .objs .h { height: 22px; margin: 0 0 1px; }
        .lower-icons { display: flex; gap: 5px; height: 28px; margin: 6px -4px 0 -4px; padding: 1px 0 0 7px; box-sizing: border-box; border-bottom: 1px solid #9c9c9c; align-items: flex-start; }
        .lower { margin-top: 1px; height: 182px; display: flex; flex-direction: column; }
        .lower .in { flex: 1; display: flex; }
        .lower .gut { width: 17px; background: #f0f0f0; }
      </style>
      <div class="grip"><i></i><b>◂</b><b>✕</b></div>
      <div class="icons">
        <cad-icon name="panelred" w="21"></cad-icon>
        <cad-icon name="panelfolders" w="21"></cad-icon>
        <cad-icon name="panelhand" w="21"></cad-icon>
        <cad-icon name="panelcircle" w="21"></cad-icon>
        <cad-icon name="panelballs" w="22"></cad-icon>
      </div>
      <div class="frame">
        <div class="tabs">
          <div class="tab on"><cad-icon name="modelicon" w="18"></cad-icon>Modell</div>
          <div class="tab off"><cad-icon name="folienicon" w="16"></cad-icon>Folien</div>
        </div>
        <div class="lists">
          <div class="list tree">
            <div class="sel">
              <svg width="8" height="10" fill="none" stroke="#8a9aa8" stroke-width="1.500"><path d="M2 1l4 4-4 4"/></svg>
              <cad-icon name="foldermodel" w="16"></cad-icon><span>D:\\AVCHD_Filme\\Lernvideos\\E</span>
            </div>
            <div class="grow"></div>
            <cad-scrollbar start="0" size="69" arrow="17" thick="15"></cad-scrollbar>
          </div>
          <div class="list objs">
            <div class="h">Objektname</div>
            <div class="r"><cad-icon name="raum" w="16"></cad-icon>3D-Raum</div>
            <div class="r"><cad-icon name="zeichnung" w="16"></cad-icon>Zeichnung</div>
          </div>
        </div>
        <div class="lower-icons">
          <cad-icon name="delcone" w="23"></cad-icon>
          <cad-icon name="bucket" w="23"></cad-icon>
        </div>
        <div class="list lower">
          <div class="in"><div class="gut"></div></div>
          <cad-scrollbar start="0" size="78" arrow="17" thick="16"></cad-scrollbar>
        </div>
      </div>`;
  }
}
customElements.define('model-panel', ModelPanel);

class ToolStrip extends HTMLElement {
  connectedCallback() {
    const cell = (name, more, line, h, pad) => `
      <div class="c${line ? ' l' : ''}" style="height:${h || 28}px;padding-top:${pad === undefined ? 3 : pad}px">
        <cad-icon name="${name}" w="22"></cad-icon>${more ? '<svg class="m" width="4" height="6"><path d="M0 0l4 3-4 3z" fill="#000"/></svg>' : ''}
      </div>`;
    const col1 = ['arrowdark', 'ball', 'globecursor', 'pencil', 'tools', 'rotate', 'greenpen', 'cross', 'bolt', 'weld', 'textpen', 'hatch', 'info', 'eraser'];
    this.attachShadow({ mode: 'open' });
    this.shadowRoot.innerHTML = `
      <style>
        :host { display: flex; flex: none; width: 59px; }
        .col { width: 29px; box-sizing: border-box; padding-top: 1px; border-right: 1px solid #9c9c9c; }
        .c { box-sizing: border-box; position: relative; padding-left: 3px; }
        .l::after { content: ""; position: absolute; left: 3px; right: 3px; bottom: 0; height: 1px; background: #9a9a9a; }
        .m { position: absolute; right: 2px; bottom: 4px; }
      </style>
      <div class="col">${col1.map((n, i) => cell(n, i < 13, i < 13)).join('')}</div>
      <div class="col" style="width:30px">
        ${cell('arrowlight', false, true)}
        ${cell('cylinder', false, true)}
        ${cell('triple', false, false, 27)}
        ${cell('arch', false, false, 24, 1)}
        ${cell('zipper', false, true, 24, 0)}
        ${cell('chisel', false, false, 28, 5)}
      </div>`;
  }
}
customElements.define('tool-strip', ToolStrip);

class ModelCanvas extends HTMLElement {
  connectedCallback() {
    this.attachShadow({ mode: 'open' });
    this.shadowRoot.innerHTML = `
      <style>
        :host { display: flex; flex-direction: column; flex: 1; min-width: 0; }
        .row { flex: 1; min-height: 0; display: flex; }
        svg { display: block; flex: 1; min-width: 0; height: 100%; }
      </style>
      <div class="row">
        <svg viewBox="503 103 1401 888" preserveAspectRatio="none">
          <rect x="503" y="103" width="1401" height="888" fill="#fff"/>
          <polygon points="1084,103 1604,103 1904,241 1904,991 768,991 503,869 503,618" fill="#e0ffff"/>
          <g stroke="#111" fill="none">
            <path d="M1084 103L503 618"/><path d="M1604 103L1904 241"/><path d="M503 869L768 991"/>
            <path d="M1855 103L1782 991" stroke="#8a8a8a"/>
          </g>
          <polygon points="1047,103 1396,263 1124,504 775,343" fill="#8c8c8c"/>
          <polygon points="775,343 1124,504 1100,811 751,650" fill="#595959"/>
          <polygon points="1124,504 1396,263 1371,566 1100,811" fill="#424242"/>
          <polygon points="1044,218 1063,202 1063,240 1057,239" fill="#525252"/>
          <polygon points="1063,202 1102,205 1099,241 1063,240" fill="#6e6e6e"/>
          <polygon points="1102,205 1114,228 1099,241" fill="#484848"/>
          <g stroke="#1a1a90" stroke-width="1.300" fill="none" stroke-dasharray="10 3 2 3">
            <path d="M1090 241L1085 303"/><path d="M937 579L890 620"/><path d="M1249 538L1320 571"/>
          </g>
        </svg>
        <cad-scrollbar vertical start="427" size="215" arrow="18" thick="16"></cad-scrollbar>
      </div>
      <cad-scrollbar start="423" size="342" arrow="18" thick="16"></cad-scrollbar>`;
  }
}
customElements.define('model-canvas', ModelCanvas);

class CadStatusbar extends HTMLElement {
  connectedCallback() {
    this.attachShadow({ mode: 'open' });
    this.shadowRoot.innerHTML = `
      <style>
        :host { display: flex; height: 32px; align-items: flex-start; background: #f0f0f0; position: relative; }
        .f { box-sizing: border-box; height: 19px; margin-top: 6px; border-top: 1px solid #b4b4b4; display: flex; align-items: center; padding-left: 2px; white-space: nowrap; letter-spacing: -.16px; }
        .a { width: 197px; border-left: 1px solid #d0d0d0; }
        .b { width: 1350px; margin-left: 3px; border-left: 1px solid #b4b4b4; }
        .logo { margin-left: auto; margin-top: 2px; display: block; }
      </style>
      <div class="f a">Flächen entfernen</div>
      <div class="f b">Einzelflächen: Identifizieren Sie eine Körperfläche</div>
      <svg class="logo" width="64" height="30" viewBox="0 0 64 30">
        <rect width="64" height="30" fill="#dcdcdc"/>
        <ellipse cx="29" cy="15" rx="26" ry="12" transform="rotate(-12 29 15)" fill="#d8003a"/>
        <text x="13" y="13" font-family="DejaVu Sans, sans-serif" font-weight="700" font-size="10" letter-spacing=".8" fill="#fff">Data</text>
        <text x="21" y="25" font-family="DejaVu Sans, sans-serif" font-weight="700" font-style="italic" font-size="10.500" letter-spacing="1" fill="#111">Solid</text>
      </svg>`;
  }
}
customElements.define('cad-statusbar', CadStatusbar);

class FloatWindow extends HTMLElement {
  connectedCallback() {
    const grey = this.hasAttribute('grey-close');
    const logo = this.hasAttribute('logo');
    this.attachShadow({ mode: 'open' });
    this.shadowRoot.innerHTML = `
      <style>
        :host { position: absolute; display: flex; flex-direction: column; box-sizing: border-box; background: #f0f0f0; border: ${grey ? '0' : '1px solid #93a3a8'}; box-shadow: 0 2px 10px rgba(0, 60, 70, .35); }
        .head { flex: none; box-sizing: border-box; height: 30px; background: #fff; display: flex; align-items: center; padding: 0 8px 3px; color: #999; }
        .head cad-icon { margin-right: 5px; }
        .x { margin-left: auto; display: flex; }
        .x.g { margin-right: -7px; width: 19px; height: 19px; background: #e6e6e6; }
        .body { flex: 1; min-height: 0; }
      </style>
      <div class="head">
        ${logo ? '<cad-icon name="swoosh" w="16"></cad-icon>' : ''}
        <span>${this.getAttribute('title-text')}</span>
        ${grey ? '<span class="x g"></span>' : '<span class="x"><svg width="12" height="12" stroke="#777"><path d="M1 1l10 10M11 1L1 11"/></svg></span>'}
      </div>
      <div class="body"><slot></slot></div>`;
  }
}
customElements.define('float-window', FloatWindow);

class CadGroup extends HTMLElement {
  connectedCallback() {
    const t = this.getAttribute('legend');
    const pt = this.getAttribute('pt') || 3;
    const pl = this.getAttribute('pl') || 10;
    const ml = this.getAttribute('ml') || -6;
    this.attachShadow({ mode: 'open' });
    this.shadowRoot.innerHTML = `
      <style>
        :host { display: block; }
        fieldset { box-sizing: border-box; height: 100%; margin: 0; border: 1px solid #dcdcdc; padding: ${pt}px 0 0 ${pl}px; min-width: 0; }
        legend { padding: 0 4px; margin-left: ${ml}px; line-height: 16px; }
      </style>
      <fieldset><legend>${t}</legend><slot></slot></fieldset>`;
  }
}
customElements.define('cad-group', CadGroup);

class CadRadio extends HTMLElement {
  connectedCallback() {
    const on = this.hasAttribute('checked');
    this.attachShadow({ mode: 'open' });
    this.shadowRoot.innerHTML = `
      <style>
        :host { display: flex; align-items: center; height: var(--row, 20px); gap: 3px; white-space: nowrap; }
        svg { flex: none; }
      </style>
      <svg width="13" height="13"><circle cx="6.500" cy="6.500" r="5.800" fill="#fff" stroke="#333"/>${on ? '<circle cx="6.500" cy="6.500" r="3.400" fill="#333"/>' : ''}</svg>
      <slot></slot>`;
  }
}
customElements.define('cad-radio', CadRadio);

class SelectionForm extends HTMLElement {
  connectedCallback() {
    this.attachShadow({ mode: 'open' });
    this.shadowRoot.innerHTML = `
      <style>
        :host { display: block; padding: 2px 3px 0 4px; }
        .g { display: grid; grid-template-columns: 179px 93px; grid-template-rows: 69px 69px; column-gap: 3px; row-gap: 15px; }
        .g .big { grid-row: 1 / 3; }
        .txt { height: 86px; margin-top: 5px; background: #fff; border: 1px solid #7d7d7d; box-sizing: border-box; }
        .btns { display: flex; margin-top: 6px; }
        .btns span { box-sizing: border-box; height: 21px; display: flex; align-items: center; justify-content: center; background: #e1e1e1; border: 1px solid #adadad; white-space: nowrap; }
      </style>
      <div class="g">
        <cad-group class="big" legend="Selektionsmodus" pt="7" style="--row:20.4px">
          <cad-radio checked>Einzelfläche</cad-radio>
          <cad-radio>Rundungssequenz</cad-radio>
          <cad-radio>Rundungsnetz</cad-radio>
          <cad-radio>Angrenzende Rundungen</cad-radio>
          <cad-radio>Vorsprung</cad-radio>
          <cad-radio>Vertiefung</cad-radio>
        </cad-group>
        <cad-group legend="Auswahl" pt="3" pl="5" ml="-1" style="--row:23px">
          <cad-radio>anwenden</cad-radio>
          <cad-radio checked>bestätigen</cad-radio>
        </cad-group>
        <cad-group legend="Flächen" pt="3" pl="5" ml="-1" style="--row:23px">
          <cad-radio checked>hinzufügen</cad-radio>
          <cad-radio>entfernen</cad-radio>
        </cad-group>
      </div>
      <div class="txt"></div>
      <div class="btns">
        <span style="width:88px">Übernehmen</span>
        <span style="width:87px;margin-left:3px">Entfernen</span>
        <span style="width:87px;margin-left:7px;margin-top:1px">Letzte Selektion</span>
      </div>`;
  }
}
customElements.define('selection-form', SelectionForm);

class CameraGlobe extends HTMLElement {
  connectedCallback() {
    const grey = this.hasAttribute('grey');
    const mark = grey ? '#c4222c' : '#e8c820';
    const stops = grey ? ['#e4e4e4', '#9a9a9a', '#3a3a3a'] : ['#d8eef8', '#4aa3da', '#134d8e'];
    const land = grey ? '#5c5c5c' : '#2c6aa8';
    const land2 = grey ? '#c4c4c4' : '#a9d3e8';
    let marks = '';
    for (let a = 0; a < 360; a += 45) {
      marks += `<path d="M-3.500 -33h7L0 -28z" transform="rotate(${a})" fill="${mark}" stroke="${grey ? '#8c1a20' : '#8a8a5a'}" stroke-width=".5"/>`;
    }
    this.attachShadow({ mode: 'open' });
    this.shadowRoot.innerHTML = `
      <style>:host { display: block; flex: none; width: 68px; height: 68px; } svg { display: block; }</style>
      <svg width="68" height="68" viewBox="-34 -34 68 68">
        <defs>
          <radialGradient id="g" cx=".45" cy=".3" r=".75"><stop offset="0" stop-color="${stops[0]}"/><stop offset=".55" stop-color="${stops[1]}"/><stop offset="1" stop-color="${stops[2]}"/></radialGradient>
          <clipPath id="c"><circle r="32"/></clipPath>
        </defs>
        <circle r="32" fill="url(#g)" stroke="${grey ? '#333' : '#34588a'}" stroke-width="1.200"/>
        <g clip-path="url(#c)">
          <path d="M-32 -2c8-8 18-4 24-8 6-3 8 6 2 10s-14 4-12 12-8 8-14 2z" fill="${land}" opacity=".8"/>
          <path d="M-6 -24c6-4 14-2 14 4s-8 6-14 4-4-6 0-8zM6 -8c8-2 16 0 22-4s6 8 0 10-14 4-20 0-6-4-2-6z" fill="${land2}"/>
          <path d="M4 10c8-4 20-4 28 2v10c-10 6-22 6-26-2s-4-8-2-10z" fill="${land2}" opacity=".7"/>
          <g stroke="#fff" stroke-width="1.200"><path d="M-11.500 -34V34M11.500 -34V34M-34 -12H34M-34 12H34"/></g>
        </g>
        ${marks}
        <circle r="3" fill="${mark}" stroke="${grey ? '#8c1a20' : '#8a8a5a'}" stroke-width=".5"/>
      </svg>`;
  }
}
customElements.define('camera-globe', CameraGlobe);

class CameraControls extends HTMLElement {
  connectedCallback() {
    const cube = (front, side) => `
      <svg width="22" height="23" viewBox="0 0 22 23">
        <path d="M1 5l14-4 6 3-14 4z" fill="#7a7f84"/>
        <path d="M1 5l14 3v14L1 19z" fill="${front}"/>
        <path d="M15 8l6-4v14l-6 4z" fill="${side}"/>
      </svg>`;
    this.attachShadow({ mode: 'open' });
    this.shadowRoot.innerHTML = `
      <style>
        :host { display: flex; align-items: center; height: 78px; padding-left: 1px; gap: 4px; }
        .cubes { display: flex; flex-direction: column; gap: 7px; margin-left: 1px; }
      </style>
      <camera-globe></camera-globe>
      <camera-globe grey></camera-globe>
      <div class="cubes">${cube('#cfd0d2', '#8cc8f2')}${cube('#7cc2f4', '#7cc2f4')}</div>`;
  }
}
customElements.define('camera-controls', CameraControls);

class StatusFields extends HTMLElement {
  connectedCallback() {
    const tops = [0, 0, 1, 0, 0, 1, 0, 0, 0, 1];
    this.attachShadow({ mode: 'open' });
    this.shadowRoot.innerHTML = `
      <style>
        :host { display: flex; height: 242px; }
        .left { width: 107px; border-right: 2px solid #777; }
        .fields { margin-left: 9px; flex: 1; }
        .fields div { box-sizing: border-box; height: 20px; background: #fff; border: 1px solid #7d7d7d; }
      </style>
      <div class="left"></div>
      <div class="fields">${tops.map(t => `<div style="margin-top:${t}px"></div>`).join('')}</div>`;
  }
}
customElements.define('status-fields', StatusFields);
</script>
</body>
</html>
